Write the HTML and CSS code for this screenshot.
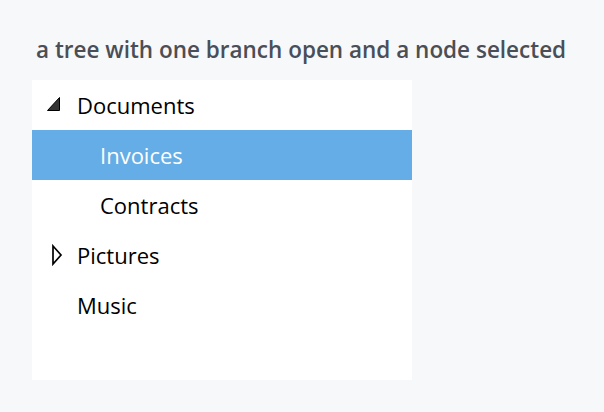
FILE: index.html
```html
<!DOCTYPE html>
<html>
<head>
    <link rel="stylesheet" href="styles.css">
</head>
<body>
    <div class="main-container">
        <h1 class="caption">a tree with one branch open and a node selected</h1>
        <ul class="tree">
            <li class="tree-row">
                <span class="toggle">
                    <svg width="30" height="20" viewBox="0 0 30 20"><polygon points="13.5,2.5 13.5,15.5 1.5,15.5" fill="#333" stroke="#000" stroke-width="1"/></svg>
                </span>
                <span class="label">Documents</span>
            </li>
            <li class="tree-row child selected">
                <span class="label">Invoices</span>
            </li>
            <li class="tree-row child">
                <span class="label">Contracts</span>
            </li>
            <li class="tree-row">
                <span class="toggle">
                    <svg width="30" height="22" viewBox="0 0 30 22"><polygon points="7,2 15,11 7,20" fill="none" stroke="#000" stroke-width="1.7"/></svg>
                </span>
                <span class="label">Pictures</span>
            </li>
            <li class="tree-row">
                <span class="toggle"></span>
                <span class="label">Music</span>
            </li>
        </ul>
    </div>
</body>
</html>
```

FILE: styles.css
```css
body {
    margin: 0;
    background-color: #f7f8fa;
    font-family: "Open Sans", "Noto Sans", sans-serif;
}

.main-container {
    padding: 35px 32px;
}

.caption {
    margin: 0 0 15px 4px;
    font-size: 22.5px;
    font-weight: 600;
    color: #4a4f57;
    line-height: 30px;
    white-space: nowrap;
}

.tree {
    list-style: none;
    margin: 0;
    padding: 0;
    width: 380px;
    height: 300px;
    background: white;
}

.tree-row {
    display: flex;
    align-items: center;
    height: 50px;
    padding-left: 14px;
    font-size: 22px;
    color: #000;
}

.tree-row.child {
    padding-left: 68px;
}

.tree-row.selected {
    background-color: #64ade6;
    color: white;
}

.toggle {
    display: flex;
    align-items: center;
    width: 30px;
    margin-right: 1px;
}
```
